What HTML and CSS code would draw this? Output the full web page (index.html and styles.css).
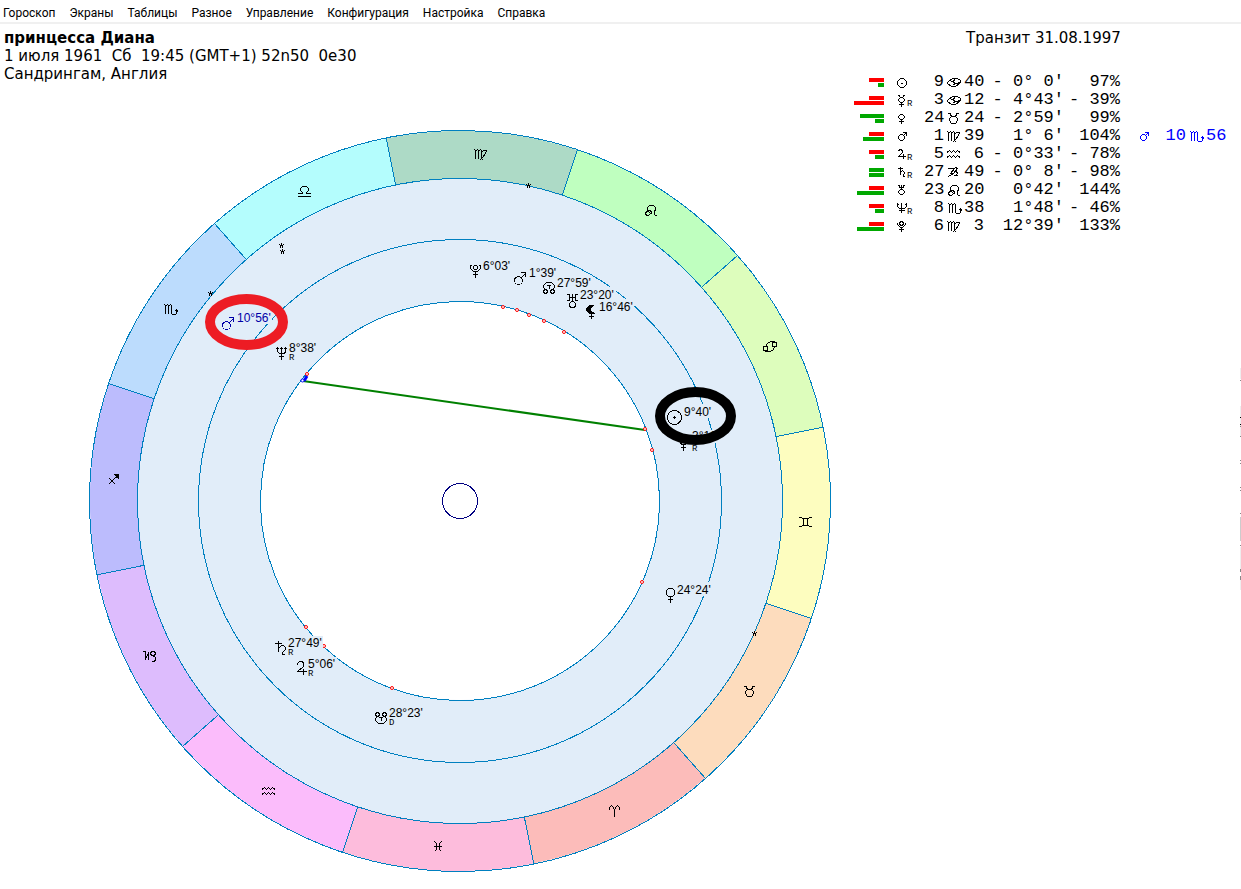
FILE: index.html
```
<!DOCTYPE html>
<html lang="ru">
<head>
<meta charset="utf-8">
<title>принцесса Диана</title>
<link rel="stylesheet" href="styles.css">
</head>
<body>
<svg class="defs" aria-hidden="true">
  <defs>
    <path id="wedge" d="M311 -83.3L357.4 -95.8A370 370 0 0 1 357.4 95.8L311 83.3A322 322 0 0 0 311 -83.3Z"/>
    <path id="rays" d="M315.5 -64.2L362.6 -73.8M241.2 -213.4L277.1 -245.2M102.2 -305.4L117.4 -350.9"/>
    <g id="aries"><path d="M.5 4.5V2.5L2.5.5L4.5 2.5L5.5 5.5V11.5M5.5 5.5L6.5 2.5L8.5.5L10.5 2.5V4.5"/></g>
    <g id="taurus"><path d="M0 .5H2L3.5 3.5H7.5L9 .5H11M3.5 3.5L1.5 5.5V7.5L3.5 10.5H7.5L9.5 7.5V5.5L7.5 3.5"/></g>
    <g id="gemini"><path d="M0 .5H3M3 1.5H10M10 .5H13M4.5 1.5V8.5M8.5 1.5V8.5M3 8.5H10M0 9.5H3M10 9.5H13"/></g>
    <g id="cancer"><path d="M.5 5.5H4.5V9.5H.5ZM9.5 1.5H13.5V5.5H9.5ZM2.5 5.5L4.5 2.5L7.5.5H11.5L13.5 2.5M.5 8.5L2.5 10.5H7.5L10.5 8.5L11.5 5.5"/></g>
    <g id="leo"><path d="M1.5 6.5H3.5L5.5 8.5L3.5 10.5H1.5L.5 8.5ZM3.5 6.5L2.5 4.5V2.5L4.5.5H8.5L10.5 2.5V4.5L9.5 6.5V9.5L10.5 10.5H12M3.5 5.5H5.5L6.5 7.5L5.5 9.5"/></g>
    <g id="virgo"><path d="M.5 1.5L1.5.5L2.5 1.5V9.5M2.5 2.5L4.5.5L5.5 1.5V9.5M5.5 2.5L7.5.5L8.5 1.5V9.5L10.5 11.5M8.5 3.5L10.5 1.5H13.5L12.5 4.5L9.5 8.5L6.5 11.5"/></g>
    <g id="libra"><path d="M0 7.5H4.5V6.5L2.5 4.5V2.5L4.5.5H8.5L10.5 2.5V4.5L8.5 6.5V7.5H13M0 10.5H13"/></g>
    <g id="scorpio"><path d="M.5 1.5L1.5.5L2.5 1.5V9.5M2.5 2.5L4.5.5L5.5 1.5V9.5M5.5 2.5L7.5.5L8.5 1.5V9.5L9.5 10.5H12.5L13.5 9.5V5.5M11.5 7.5L13.5 5.5L15 7.5"/></g>
    <g id="sagittarius"><path d="M.5 10.5L10.5.5M1.5 4.5L7.5 10.5"/><path class="solid" d="M5 0H11V6L9 4H8V3Z"/></g>
    <g id="capricorn"><path d="M0 .5H2.5V8.5L5.5 1.5V8.5M7.5 1.5L9.5.5H11.5L12.5 2.5L11.5 4.5H8.5L7.5 2.5M9.5 4.5L12.5 6.5V9.5L10.5 10.5H8.5"/></g>
    <g id="aquarius"><path d="M0 2.5L2.5.5L4.5 2.5L6.5.5L8.5 2.5L10.5.5L13 2.5M0 7.5L2.5 5.5L4.5 7.5L6.5 5.5L8.5 7.5L10.5 5.5L13 7.5"/></g>
    <g id="pisces"><path d="M.5.5L2.5 2.5V8.5L.5 10.5M7.5.5L5.5 2.5V8.5L7.5 10.5M0 5.5H8"/></g>

    <g id="pluto"><circle cx="5.5" cy="3.5" r="2"/><path d="M0 1.5H2M.5 1.5V4.5L3.5 7.5H7.5L10.5 4.5V1.5M9 1.5H11M5.5 7.5V14M3 10.5H8"/></g>
    <g id="mars"><circle cx="4.5" cy="8.5" r="4"/><path d="M7.5 5.5L11.5 1.5M7 .5H11.5V5"/></g>
    <g id="north"><path d="M3.5 7.5H1.5L.5 9.5L1.5 11.5H3.5L4.5 9.5ZM2.5 7.5L.5 5.5V3.5L3.5.5H8.5L11.5 3.5V5.5L9.5 7.5M8.5 7.5H10.5L11.5 9.5L10.5 11.5H8.5L7.5 9.5ZM4 3.5H8M6 3.5V7"/></g>
    <g id="south"><path d="M3.5 4.5H1.5L.5 2.5L1.5.5H3.5L4.5 2.5ZM2.5 4.5L.5 6.5V8.5L3.5 11.5H8.5L11.5 8.5V6.5L9.5 4.5M8.5 4.5H10.5L11.5 2.5L10.5.5H8.5L7.5 2.5ZM4 5.5H8M6 5.5V9"/></g>
    <g id="uranus"><circle cx="5.5" cy="10.5" r="3"/><path d="M0 .5H2.5V6.5H0M11 .5H8.5V6.5H11M2.5 3.5H8.5M5.5 0V7"/></g>
    <g id="lilith"><path class="solid" d="M8 0L4 0L1 2L0 5L1 7L4 9H9V8L6 7L5 5V3Z"/><path d="M5.5 8V14M3 11.5H8"/></g>
    <g id="neptune"><path d="M0 1.5H3M8 1.5H11M1.5 0V4.5L3.5 6.5H8.5L9.5 4.5V0M5.5 0V13M3 9.5H8M4 1.5H7"/></g>
    <g id="sun"><circle cx="7.5" cy="7.5" r="7"/><path d="M6 7.5H9M7.5 6V9"/></g>
    <g id="mercury"><circle cx="5.5" cy="5.5" r="3"/><path d="M2.5 0L4.5 2.5H6.5L8.5 0M5.5 9V15M3 11.5H8"/></g>
    <g id="venus"><path d="M2.5.5H6.5L8.5 2.5V6.5L6.5 8.5H2.5L.5 6.5V2.5ZM4.5 8.5V15M2 11.5H7"/></g>
    <g id="saturn"><path d="M0 2.5H7M3.5 0V11M3.5 7.5L6.5 4.5H8.5L10.5 6.5V8.5L7.5 11.5V13.5H10"/></g>
    <g id="jupiter"><path d="M.5 3.5V2.5L2.5.5H5.5L6.5 2.5V5.5L.5 10.5H10M6.5 8V14"/></g>
    <g id="star"><path d="M2.5 0V3M0 1.5L2.5 2.5L5 1.5M2.5 2.5L1 4.5M2.5 2.5L4 4.5"/></g>

    <g id="s-sun"><path d="M4.5 5.5H7.5L10.5 8.5V11.5L7.5 14.5H4.5L1.5 11.5V8.5ZM5 10H7"/></g>
    <g id="s-mercury"><path d="M2.5 4L4.5 6.5H6.5L8.5 4M4.5 6.5L2.5 8.5V9.5L4.5 11.5H6.5L8.5 9.5V8.5L6.5 6.5M5.5 11V16M3 13.5H8"/></g>
    <g id="s-venus"><path d="M4.5 5.5H6.5L8.5 7.5V8.5L6.5 10.5H4.5L2.5 8.5V7.5ZM5.5 11V15M3 12.5H8"/></g>
    <g id="s-mars"><path d="M4.5 7.5H6.5L8.5 9.5V11.5L6.5 13.5H4.5L2.5 11.5V9.5ZM7.5 8.5L10.5 5.5M7 5.5H10.5V9"/></g>
    <g id="s-jupiter"><path d="M2.5 6.5L3.5 4.5H5.5L6.5 6.5V7.5L2.5 11.5H10M7.5 9V14"/></g>
    <g id="s-saturn"><path d="M2 5.5H7M4.5 4V12M4.5 9.5L6.5 7.5L8.5 9.5L7.5 12.5L8.5 14.5"/></g>
    <g id="s-uranus"><path d="M2 4.5H4M7 4.5H9M3.5 4.5V6.5H7.5V4.5M5.5 4V9M4.5 8.5H6.5L8.5 10.5V11.5L6.5 13.5H4.5L2.5 11.5V10.5Z"/></g>
    <g id="s-neptune"><path d="M1.5 4V7.5L3.5 9.5H8.5L10.5 7.5V4M1 5.5H3M9 5.5H11M5.5 4V14M3 11.5H9"/></g>
    <g id="s-pluto"><path d="M1.5 5.5V7.5L4.5 10.5H6.5L9.5 7.5V5.5M4.5 4.5H6.5L7.5 6.5L6.5 8.5H4.5L3.5 6.5ZM5.5 10V15M3 12.5H8"/></g>
    <g id="s-cancer"><path d="M1 9.5L6.5 5.5H11.5L14.5 7.5V9.5L9.5 13.5H5.5L1.5 10.5M4.5 8.5H6.5L8.5 10.5L7.5 12.5M8.5 6.5L7.5 8.5L9.5 10.5H11.5L14.5 8.5"/></g>
    <g id="s-capricorn"><path d="M2 5.5H8.5L4.5 10.5H7.5L11.5 5.5L9.5 4.5M7.5 8.5H10.5L11.5 10.5L9.5 12.5H7.5M7.5 10.5L2.5 13.5M7.5 12.5H12"/></g>
  </defs>
</svg>

<nav class="menu" aria-label="Главное меню">
  <button type="button">Гороскоп</button>
  <button type="button">Экраны</button>
  <button type="button">Таблицы</button>
  <button type="button">Разное</button>
  <button type="button">Управление</button>
  <button type="button">Конфигурация</button>
  <button type="button">Настройка</button>
  <button type="button">Справка</button>
</nav>

<main class="workspace">
  <section class="natal">
    <header class="person">
      <h1>принцесса Диана</h1>
      <p>1 июля 1961  Сб  19:45 (GMT+1) 52n50  0e30</p>
      <p>Сандрингам, Англия</p>
    </header>
    <svg class="wheel" viewBox="89 130 743 743" role="img" aria-label="Карта гороскопа">
      <circle class="field" cx="460" cy="501" r="322"/>
      <circle class="hollow" cx="460" cy="501" r="199"/>
      <g transform="translate(460 501)">
        <use href="#wedge" fill="#fdfdbf" transform="rotate(3.5)"/>
        <use href="#wedge" fill="#ddfdbc" transform="rotate(-26.5)"/>
        <use href="#wedge" fill="#bfffbf" transform="rotate(-56.5)"/>
        <use href="#wedge" fill="#addac6" transform="rotate(-86.5)"/>
        <use href="#wedge" fill="#b4fdfd" transform="rotate(-116.5)"/>
        <use href="#wedge" fill="#bcdcfd" transform="rotate(-146.5)"/>
        <use href="#wedge" fill="#bcbcfd" transform="rotate(-176.5)"/>
        <use href="#wedge" fill="#ddbcfd" transform="rotate(153.5)"/>
        <use href="#wedge" fill="#fbbcfb" transform="rotate(123.5)"/>
        <use href="#wedge" fill="#fdbcdc" transform="rotate(93.5)"/>
        <use href="#wedge" fill="#fcbcba" transform="rotate(63.5)"/>
        <use href="#wedge" fill="#fddcbd" transform="rotate(33.5)"/>
      </g>
      <g class="rings" transform="translate(460 501)">
        <use href="#rays"/>
        <use href="#rays" transform="rotate(90)"/>
        <use href="#rays" transform="rotate(180)"/>
        <use href="#rays" transform="rotate(270)"/>
        <circle r="370.5"/>
        <circle r="322.5"/>
        <circle r="261.5"/>
        <circle r="199.5"/>
        <circle class="core" r="17.5"/>
      </g>
      <g class="glyph">
        <use href="#virgo" x="473" y="149"/>
        <use href="#leo" x="645" y="205"/>
        <use href="#cancer" x="763" y="341"/>
        <use href="#gemini" x="799" y="517"/>
        <use href="#taurus" x="744" y="686"/>
        <use href="#aries" x="609" y="805"/>
        <use href="#pisces" x="434" y="841"/>
        <use href="#aquarius" x="262" y="787"/>
        <use href="#capricorn" x="143" y="651"/>
        <use href="#sagittarius" x="108" y="474"/>
        <use href="#scorpio" x="163" y="304"/>
        <use href="#libra" x="298" y="186"/>
        <use href="#star" x="526" y="183"/>
        <use href="#star" x="279" y="243"/>
        <use href="#star" x="280" y="249"/>
        <use href="#star" x="208" y="291"/>
        <use href="#star" x="752" y="631"/>
      </g>
      <path class="aspect" d="M303 381L645 430"/>
      <g class="dots">
        <circle cx="503" cy="307" r="1.5"/>
        <circle cx="517" cy="310" r="1.5"/>
        <circle cx="529" cy="315" r="1.5"/>
        <circle cx="544" cy="321" r="1.5"/>
        <circle cx="564" cy="332" r="1.5"/>
        <circle cx="645" cy="429" r="1.5"/>
        <circle cx="652" cy="450" r="1.5"/>
        <circle cx="642" cy="582" r="1.5"/>
        <circle cx="306" cy="627" r="1.5"/>
        <circle cx="324" cy="646" r="1.5"/>
        <circle cx="392" cy="688" r="1.5"/>
        <circle cx="307" cy="374" r="1.5"/>
      </g>
      <g class="transit-dot"><path d="M304 381L307 376"/><circle cx="302.5" cy="380.5" r="1.5"/></g>
      <g class="patch">
        <rect x="556" y="275" width="36" height="14"/>
        <rect x="579" y="287" width="37" height="14"/>
        <rect x="598" y="299" width="36" height="14"/>
        <rect x="683" y="404" width="30" height="14"/>
        <rect x="690" y="430" width="30" height="13"/>
        <rect x="676" y="582" width="36" height="14"/>
        <rect x="287" y="636" width="36" height="13"/>
        <rect x="307" y="657" width="30" height="13"/>
        <rect x="236" y="310" width="36" height="14"/>
      </g>
      <g class="glyph">
        <use href="#pluto" x="470" y="264"/>
        <use href="#mars" x="514" y="272"/>
        <use href="#north" x="543" y="282"/>
        <use href="#uranus" x="567" y="294"/>
        <use href="#lilith" x="586" y="305"/>
        <use href="#neptune" x="276" y="347"/>
        <use href="#sun" x="667" y="410"/>
        <use href="#mercury" x="678" y="436"/>
        <use href="#venus" x="666" y="588"/>
        <use href="#saturn" x="275" y="641"/>
        <use href="#jupiter" x="297" y="661"/>
        <use href="#south" x="375" y="712"/>
      </g>
      <g class="glyph transit"><use href="#mars" x="222" y="317"/></g>
      <g class="degrees">
        <text x="483" y="270">6°03'</text>
        <text x="529" y="277">1°39'</text>
        <text x="557" y="287">27°59'</text>
        <text x="580" y="299">23°20'</text>
        <text x="599" y="311">16°46'</text>
        <text x="289" y="352">8°38'</text>
        <text x="684" y="416">9°40'</text>
        <text x="692" y="440">3°12'</text>
        <text x="677" y="594">24°24'</text>
        <text x="288" y="647">27°49'</text>
        <text x="308" y="668">5°06'</text>
        <text x="389" y="717">28°23'</text>
        <text class="transit-text" x="237" y="322">10°56'</text>
      </g>
      <g class="motion">
        <text x="289" y="360">R</text>
        <text x="692" y="451">R</text>
        <text x="288" y="655">R</text>
        <text x="308" y="676">R</text>
        <text x="389" y="725">D</text>
      </g>
      <ellipse class="mark red" cx="246.5" cy="322" rx="36.5" ry="23"/>
      <ellipse class="mark" cx="695.5" cy="416" rx="35.5" ry="24"/>
    </svg>
  </section>

  <section class="panel">
    <h2>Транзит 31.08.1997</h2>
    <table>
      <tbody>
        <tr>
          <td class="bars"><i class="red" style="width:15px"></i><i style="width:6px"></i></td>
          <td class="planet"><svg class="glyph"><use href="#s-sun"/></svg></td>
          <td class="deg">9</td><td class="sign"><svg class="glyph"><use href="#s-cancer" x="2"/></svg></td><td class="min">40</td>
          <td class="orb">- 0° 0'</td><td class="pct">97%</td><td class="tp"></td><td class="td"></td><td class="sign"></td><td class="min"></td>
        </tr>
        <tr>
          <td class="bars"><i class="red" style="width:15px"></i><i class="red" style="width:30px"></i></td>
          <td class="planet"><svg class="glyph"><use href="#s-mercury"/></svg><small>R</small></td>
          <td class="deg">3</td><td class="sign"><svg class="glyph"><use href="#s-cancer" x="2"/></svg></td><td class="min">12</td>
          <td class="orb">- 4°43'</td><td class="pct">- 39%</td><td></td><td></td><td></td><td></td>
        </tr>
        <tr>
          <td class="bars"><i style="width:24px"></i><i style="width:9px"></i></td>
          <td class="planet"><svg class="glyph"><use href="#s-venus"/></svg></td>
          <td class="deg">24</td><td class="sign"><svg class="glyph"><use href="#taurus" x="4" y="4"/></svg></td><td class="min">24</td>
          <td class="orb">- 2°59'</td><td class="pct">99%</td><td></td><td></td><td></td><td></td>
        </tr>
        <tr>
          <td class="bars"><i class="red" style="width:15px"></i><i style="width:21px"></i></td>
          <td class="planet"><svg class="glyph"><use href="#s-mars"/></svg></td>
          <td class="deg">1</td><td class="sign"><svg class="glyph"><use href="#virgo" x="2" y="4"/></svg></td><td class="min">39</td>
          <td class="orb">1° 6'</td><td class="pct">104%</td>
          <td class="tp now"><svg class="glyph"><use href="#s-mars"/></svg></td><td class="td now">10</td><td class="sign now"><svg class="glyph"><use href="#scorpio" x="3" y="4"/></svg></td><td class="min now">56</td>
        </tr>
        <tr>
          <td class="bars"><i class="red" style="width:15px"></i><i style="width:9px"></i></td>
          <td class="planet"><svg class="glyph"><use href="#s-jupiter"/></svg><small>R</small></td>
          <td class="deg">5</td><td class="sign"><svg class="glyph"><use href="#aquarius" x="3" y="5"/></svg></td><td class="min">6</td>
          <td class="orb">- 0°33'</td><td class="pct">- 78%</td><td></td><td></td><td></td><td></td>
        </tr>
        <tr>
          <td class="bars"><i style="width:15px"></i><i style="width:15px"></i></td>
          <td class="planet"><svg class="glyph"><use href="#s-saturn"/></svg><small>R</small></td>
          <td class="deg">27</td><td class="sign"><svg class="glyph"><use href="#s-capricorn" x="2"/></svg></td><td class="min">49</td>
          <td class="orb">- 0° 8'</td><td class="pct">- 98%</td><td></td><td></td><td></td><td></td>
        </tr>
        <tr>
          <td class="bars"><i class="red" style="width:15px"></i><i style="width:27px"></i></td>
          <td class="planet"><svg class="glyph"><use href="#s-uranus"/></svg></td>
          <td class="deg">23</td><td class="sign"><svg class="glyph"><use href="#leo" x="4" y="4"/></svg></td><td class="min">20</td>
          <td class="orb">0°42'</td><td class="pct">144%</td><td></td><td></td><td></td><td></td>
        </tr>
        <tr>
          <td class="bars"><i class="red" style="width:15px"></i><i style="width:9px"></i></td>
          <td class="planet"><svg class="glyph"><use href="#s-neptune"/></svg><small>R</small></td>
          <td class="deg">8</td><td class="sign"><svg class="glyph"><use href="#scorpio" x="3" y="4"/></svg></td><td class="min">38</td>
          <td class="orb">1°48'</td><td class="pct">- 46%</td><td></td><td></td><td></td><td></td>
        </tr>
        <tr>
          <td class="bars"><i class="red" style="width:15px"></i><i style="width:27px"></i></td>
          <td class="planet"><svg class="glyph"><use href="#s-pluto"/></svg></td>
          <td class="deg">6</td><td class="sign"><svg class="glyph"><use href="#virgo" x="2" y="4"/></svg></td><td class="min">3</td>
          <td class="orb">12°39'</td><td class="pct">133%</td><td></td><td></td><td></td><td></td>
        </tr>
      </tbody>
    </table>
  </section>
</main>

<svg class="edge" aria-hidden="true">
  <path stroke="#eee" d="M.5 8V19M.5 46V76M.5 187V209M.5 220V230"/>
  <path stroke="#ccc" d="M.5 157V181"/>
  <path stroke="#888" d="M.5 20V21M.5 66V67M.5 76V77M.5 100V101M.5 103V104M.5 127V128M.5 130V131M.5 153V154M.5 185V186M.5 209V212M.5 216V220"/>
  <path stroke="#000" d="M.5 57V58M.5 64V65"/>
</svg>
</body>
</html>
```

FILE: styles.css
```
body {
  margin: 0;
  position: relative;
  background: #fff;
  color: #000;
  font-family: "DejaVu Sans", Verdana, sans-serif;
  font-size: 15px;
  line-height: 18px;
}

.defs {
  display: block;
  width: 0;
  height: 0;
}

.menu {
  display: flex;
  gap: 14px;
  padding: 5px 3px 0;
  border-bottom: 2px solid #f0f0f0;
}

.menu button {
  padding: 0;
  border: 0;
  background: none;
  color: #000;
  font: 12px/17px Roboto, "Segoe UI", sans-serif;
}

.workspace {
  display: grid;
  grid-template-columns: minmax(0, 1fr) auto;
  padding: 5px 15px 0 0;
}

.person {
  padding-left: 4px;
}

.person h1,
.panel h2 {
  margin: 0;
  font-size: 15px;
  line-height: 18px;
}

.person p {
  margin: 0;
  white-space: pre;
}

.wheel {
  display: block;
  width: 743px;
  max-width: calc(100% - 89px);
  margin: 47px 0 0 89px;
}

.field,
.patch {
  fill: #e1edf9;
}

.hollow {
  fill: #fff;
}

.rings {
  fill: none;
  stroke: #0080c0;
  shape-rendering: crispEdges;
}

.rings .core {
  stroke: #000080;
}

.patch {
  shape-rendering: crispEdges;
}

.glyph {
  fill: none;
  stroke: #000;
  shape-rendering: crispEdges;
}

.solid {
  fill: #000;
  stroke: none;
}

.transit {
  stroke: #0000a8;
}

.aspect {
  stroke: #008000;
  stroke-width: 2;
}

.dots {
  fill: #fff;
  stroke: #f00;
}

.transit-dot {
  fill: #fff;
  stroke: #00f;
}

.transit-dot path {
  stroke-width: 3;
}

.degrees {
  font: 12px "Liberation Sans", Arial, sans-serif;
}

.transit-text {
  fill: #0000a8;
}

.motion {
  font: 9px "Liberation Mono", monospace;
}

.mark {
  fill: none;
  stroke: #000;
  stroke-width: 10;
}

.mark.red {
  stroke: #ed1c24;
}

.panel h2 {
  padding-left: 114px;
  font-weight: normal;
}

.panel table {
  margin-top: 26px;
  border-collapse: collapse;
  table-layout: fixed;
  width: 374px;
}

.panel td {
  height: 18px;
  padding: 0;
  font: 17px/18px "Liberation Mono", "Courier New", monospace;
  text-align: right;
  white-space: pre;
  vertical-align: top;
}

.panel svg {
  display: block;
  width: 20px;
  height: 18px;
}

.panel td.bars {
  width: 32px;
}

.bars i {
  display: block;
  height: 4px;
  margin: 1px 0 0 auto;
  background: #00a800;
}

.bars i:first-child {
  margin-top: 5px;
}

.bars i.red {
  background: #f00;
}

.panel td.planet {
  width: 40px;
  padding-left: 12px;
  box-sizing: border-box;
}

.planet {
  position: relative;
}

.planet small {
  position: absolute;
  left: 23px;
  top: 8px;
  font-size: 9px;
  line-height: 10px;
}

.panel .deg {
  width: 20px;
}

.panel .sign {
  width: 20px;
}

.panel .min {
  width: 20px;
}

.panel .orb {
  width: 80px;
}

.panel .pct {
  width: 56px;
}

.panel .tp {
  width: 26px;
  padding-left: 18px;
}

.panel .td {
  width: 22px;
}

.now {
  color: #00f;
}

.now .glyph {
  stroke: #00f;
}

.edge {
  position: absolute;
  top: 360px;
  right: 0;
  width: 1px;
  height: 240px;
}
```
